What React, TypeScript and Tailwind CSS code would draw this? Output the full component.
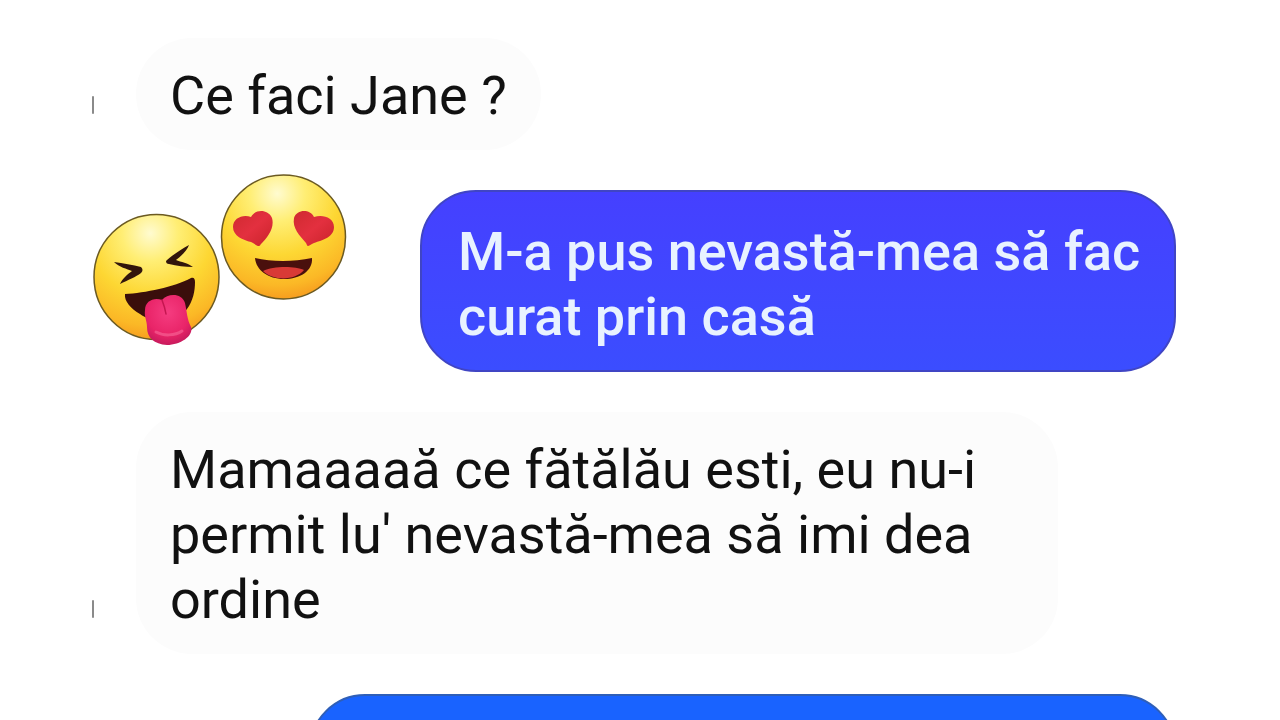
import type { ReactNode } from "react"

function Avatar() {
  return <span className="mb-[36px] h-[18px] w-[2px] shrink-0 rounded-full bg-[#8a8a8a]" />
}

function Received({ children }: { children: ReactNode }) {
  return (
    <div className="flex items-end gap-[42px]">
      <Avatar />
      <p className="max-w-[922px] rounded-[56px] bg-[#fcfcfc] px-[34px] pt-[25px] pb-[22px] text-[#111111]">{children}</p>
    </div>
  )
}

function Reactions() {
  return (
    <svg className="-mt-4 h-[176px] w-[256px] shrink-0" viewBox="92 174 256 176" aria-hidden="true">
      <defs>
        <radialGradient id="face" cx="0.45" cy="0.15" r="0.9">
          <stop offset="0" stopColor="#fffbd0" />
          <stop offset="0.25" stopColor="#ffee74" />
          <stop offset="0.55" stopColor="#fdd733" />
          <stop offset="0.82" stopColor="#fbb826" />
          <stop offset="1" stopColor="#f5921c" />
        </radialGradient>
        <radialGradient id="tongue" cx="0.5" cy="0.35" r="0.7">
          <stop offset="0" stopColor="#f53c80" />
          <stop offset="0.65" stopColor="#e92468" />
          <stop offset="1" stopColor="#c0185a" />
        </radialGradient>
        <linearGradient id="heart" x1="0" y1="0" x2="1" y2="1">
          <stop offset="0" stopColor="#cf2a30" />
          <stop offset="0.5" stopColor="#e3303f" />
          <stop offset="1" stopColor="#c9222a" />
        </linearGradient>
      </defs>

      {/* laughing, tongue out */}
      <circle cx="156.500" cy="277" r="62.500" fill="url(#face)" stroke="#6b5a22" strokeWidth="1.500" />
      <path d="M114 262 C123 263 133 265 141 267 C143 269 143 271 141 273 C136 277 128 280 120 284 C122 279 128 274 132 271 C127 269 119 267 114 262Z" fill="#31150c" />
      <path d="M189 245 C182 249 172 255 166 261 C166 263 167 264 169 264 C177 266 185 267 193 267 C188 263 181 262 176 260 C181 256 187 251 189 245Z" fill="#31150c" />
      <path d="M125 294 C145 293 174 287 191 278 C194 277 195 279 195 282 C195 291 193 301 187 309 C177 323 152 323 140 314 C131 309 124 301 125 294Z" fill="#3a0e0b" />
      <path d="M145 310 C145 301 154 297 162 300 C168 293 182 293 185 303 C187 312 187 319 191 327 C194 336 180 345 167 345 C154 344 147 338 147 327 C147 320 144 317 145 310Z" fill="url(#tongue)" />
      <path d="M162 300 C164 305 165 308 166 314" fill="none" stroke="#c51650" strokeWidth="1.500" strokeLinecap="round" />
      <path d="M156 332 C163 336 175 336 182 331" fill="none" stroke="#ff8db5" strokeWidth="3" strokeLinecap="round" opacity="0.4" />

      {/* heart eyes */}
      <circle cx="283.500" cy="237" r="62" fill="url(#face)" stroke="#6b5a22" strokeWidth="1.500" />
      <path d="M259 246 C257 246 255 244 251 242 C243 240 233 236 233 227 C233 218 243 214 251 217 C255 209 268 209 272 218 C275 228 267 238 261 244 C260 245 260 246 259 246Z" fill="url(#heart)" />
      <path d="M308 246 C307 246 307 245 306 243 C300 236 292 228 294 218 C297 209 310 209 314 217 C322 214 334 217 334 227 C334 237 323 240 314 243 C311 244 309 246 308 246Z" fill="url(#heart)" />
      <path d="M255 258 C272 262 293 262 312 258 C313 271 300 279 284 279 C268 279 256 270 255 258Z" fill="#4a100d" />
      <path d="M263 271 C273 266 295 266 304 270 C295 281 273 281 263 271Z" fill="#d93a36" />
    </svg>
  )
}

export default function App() {
  return (
    <main className="h-screen overflow-hidden bg-white pt-[38px] pr-[104px] pl-[92px] font-['Roboto',sans-serif] text-[54px] leading-[65px]">
      <div className="flex flex-col gap-10">
        <Received>Ce faci Jane ?</Received>

        <div className="flex items-start justify-between">
          <Reactions />
          <p className="max-w-[756px] rounded-[56px] border-2 border-[#4045c4] bg-linear-to-b from-[#4540ff] to-[#3b4dff] pt-[27px] pr-6 pb-[21px] pl-9 font-medium text-[#e8f2ff]">
            M-a pus nevastă-mea să fac curat prin casă
          </p>
        </div>

        <Received>Mamaaaaă ce fătălău esti, eu nu-i permit lu' nevastă-mea să imi dea ordine</Received>

        <div className="h-[182px] w-4/5 self-end rounded-[56px] border-2 border-[#2f5fb8] bg-[#1963ff]" />
      </div>
    </main>
  )
}
